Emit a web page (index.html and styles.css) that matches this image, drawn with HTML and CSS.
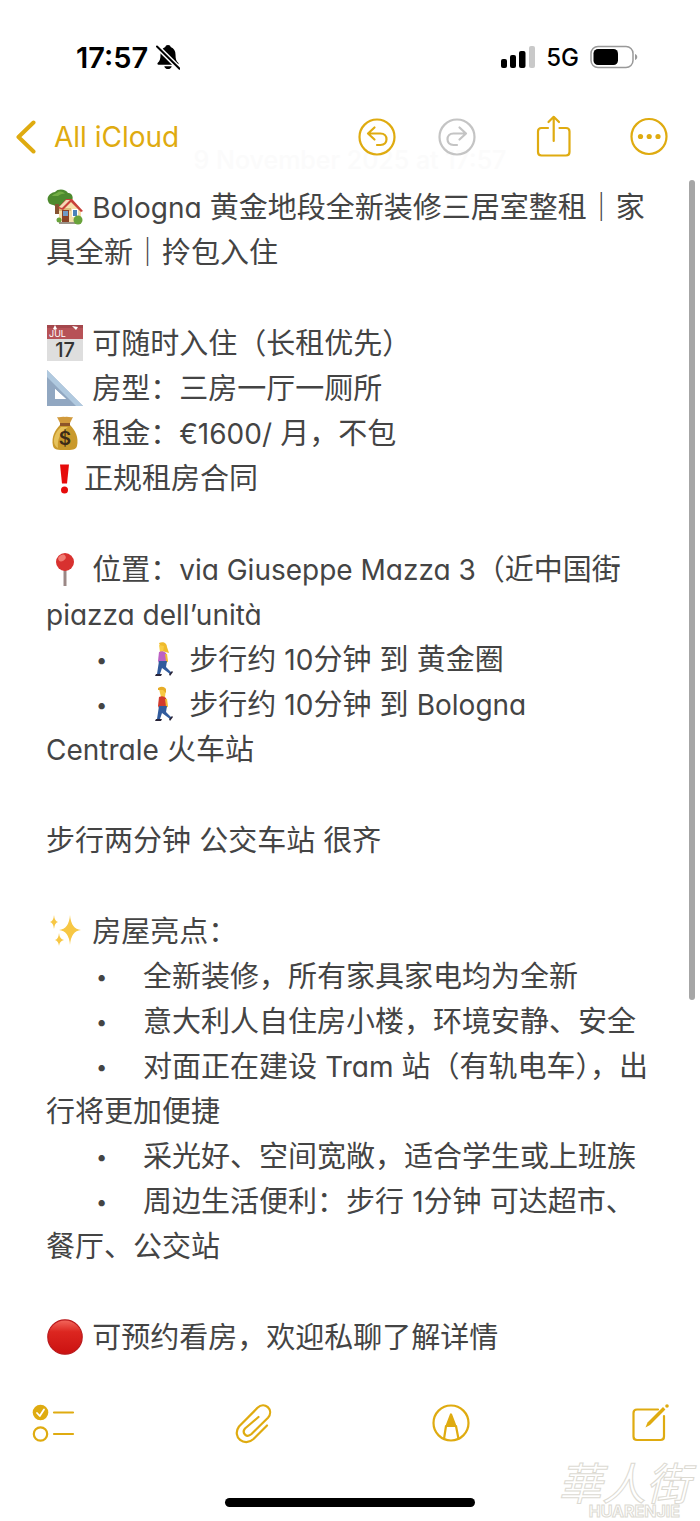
FILE: index.html
```html
<!DOCTYPE html>
<html lang="zh-CN">
<head>
  <meta charset="UTF-8">
  <meta name="viewport" content="width=device-width, initial-scale=1.0">
  <title>Notes</title>
  <link rel="stylesheet" href="styles.css">
</head>
<body>

  <!-- Status Bar -->
  <div class="status-bar">
    <div class="status-left">
      <span class="clock">17:57</span>
      <svg class="bell" width="24" height="26" viewBox="0 0 24 26">
        <path d="M12 1c-1.600 0-2.500.8-2.700 2C6 4.200 4.500 7 4.500 10.500c0 4.500-.8 6.500-2.700 8.300-.8.8-.4 2 .8 2h18.800c1.200 0 1.600-1.200.8-2-1.900-1.800-2.700-3.800-2.700-8.300C19.500 7 18 4.200 14.700 3 14.500 1.800 13.600 1 12 1zM8.300 22.200h7.400c-.4 1.800-1.800 2.900-3.700 2.900s-3.300-1.100-3.700-2.900z" fill="#000"/>
        <path d="M1 2.500l22.500 22.200" stroke="#fff" stroke-width="5"/>
        <path d="M1 2.500l22.500 22.200" stroke="#000" stroke-width="2" stroke-linecap="round"/>
      </svg>
    </div>
    <div class="status-right">
      <svg width="34" height="22" viewBox="0 0 34 22">
        <rect x="0" y="13" width="6" height="9" rx="2"/>
        <rect x="9" y="9" width="6" height="13" rx="2"/>
        <rect x="18" y="5" width="6.500" height="17" rx="2"/>
        <rect x="28" y="0" width="6" height="22" rx="2" fill="#c9c9c9"/>
      </svg>
      <span class="network">5G</span>
      <svg width="48" height="24" viewBox="0 0 48 24">
        <rect x="1" y="1.500" width="42" height="21" rx="7" fill="none" stroke="#999" stroke-width="1.500"/>
        <rect x="3.500" y="4" width="24.500" height="16" rx="4.500"/>
        <path d="M45 9c3 1 3 5 0 6z" fill="#999"/>
      </svg>
    </div>
  </div>

  <!-- Navigation -->
  <header class="nav-bar">
    <p class="note-date">9 November 2025 at 17:57</p>
    <a class="back" href="#">
      <svg width="20" height="34" viewBox="0 0 20 34">
        <path d="M17.500 2.500L2.500 17l15 14.500" fill="none" stroke="currentColor" stroke-width="4" stroke-linecap="round" stroke-linejoin="round"/>
      </svg>
      <span>All iCloud</span>
    </a>
    <div class="nav-actions">
      <div class="history">
        <button class="icon-button" type="button" aria-label="Undo">
          <svg width="38" height="42" viewBox="0 0 38 42">
            <circle cx="19" cy="21" r="17.500"/>
            <path d="M16.500 11.500L10 17.500l6.500 6M10.500 17.500h12c8 0 8 11.500 0 11.500h-3.500"/>
          </svg>
        </button>
        <button class="icon-button" type="button" aria-label="Redo" disabled>
          <svg width="38" height="42" viewBox="0 0 38 42">
            <circle cx="19" cy="21" r="17.500"/>
            <path d="M21.500 11.500l6.500 6-6.500 6M27.500 17.500h-12c-8 0-8 11.500 0 11.500H19"/>
          </svg>
        </button>
      </div>
      <button class="icon-button" type="button" aria-label="Share">
        <svg width="38" height="42" viewBox="0 0 38 42">
          <path d="M14 12H7.500Q4 12 4 15.500V36Q4 39.500 7.500 39.500H32Q35.500 39.500 35.500 36V15.500Q35.500 12 32 12H25.500M19.700 25V1M14.500 6l5.200-5.200L25 6"/>
        </svg>
      </button>
      <button class="icon-button" type="button" aria-label="More">
        <svg width="38" height="42" viewBox="0 0 38 42">
          <circle cx="19" cy="20.500" r="17.500"/>
          <g fill="currentColor" stroke="none">
            <circle cx="10.500" cy="20.500" r="2.600"/>
            <circle cx="19.200" cy="20.500" r="2.600"/>
            <circle cx="28" cy="20.500" r="2.600"/>
          </g>
        </svg>
      </button>
    </div>
  </header>

  <!-- Note -->
  <main class="note">
    <p><svg class="emoji" viewBox="0 0 36 36">
      <path d="M1 12C-1 7 5 3 8 3c3-4 11-3 13 1 5 0 6 6 3 9-3 5-8 3-9 5H9C8 15 2 17 1 12z" fill="#4d8a2e"/>
      <path d="M5 7c2-3 5-2 6-4 3-1 6 0 7 2-3-1-5 1-7 2-2 0-4 0-6 0z" fill="#72ad43"/>
      <path d="M8 15h4v10H8z" fill="#875331"/>
      <path d="M12 20l13-10 9 11v11l-12 2-10-2z" fill="#f6dfaa"/>
      <path d="M12 19h12v3H12z" fill="#dcb878"/>
      <path d="M11 19l8-9h6l11 12-2 1-10-10-8 8z" fill="#c8413a"/>
      <path d="M12 18l7-7h4l-8 8z" fill="#f4d8b4"/>
      <path d="M15 21h7v12h-7z" fill="#8a4327"/>
      <path d="M16 22h5v5h-5z" fill="#6f9bc5"/>
      <path d="M25 20h6v8h-6z" fill="#fff"/>
      <path d="M26 21h4v6h-4z" fill="#4c82ba"/>
      <path d="M12 33h17v2H12z" fill="#9a9389"/>
      <circle cx="31" cy="31" r="4.500" fill="#69a33b"/>
      <circle cx="12" cy="31" r="2.500" fill="#69a33b"/>
    </svg> <span class="latin">Bologna</span> 黄金地段全新装修三居室整租｜家具全新｜拎包入住</p>

    <div class="block">
      <p><svg class="emoji" viewBox="0 0 36 36">
        <path d="M0 0h36v36H0z" fill="#dedede"/>
        <path d="M0 0h36v14H0z" fill="#b75257"/>
        <path d="M0 0h36v3H0z" fill="#a4474c"/>
        <path d="M8 0l2 4-2 1-2-1zM25 1l6 1-2 3z" fill="#fff"/>
        <text x="2" y="12" class="cal-month">JUL</text>
        <text x="18" y="32" class="cal-day" text-anchor="middle">17</text>
      </svg> 可随时入住（长租优先）</p>
      <p><svg class="emoji" viewBox="0 0 36 36">
        <path d="M0 0v36h36zM8 19l11 10H8z" fill="#91a7c1" fill-rule="evenodd"/>
        <path d="M0 0l36 36h-7L0 7z" fill="#b0c9df"/>
        <path d="M8 19l11 10H8z" fill="#fff"/>
      </svg> 房型：三房一厅一厕所</p>
      <p><svg class="emoji" viewBox="0 0 36 36">
        <path d="M10 2c3 1 5-1 8 0 3-1 5 1 8 0l-4 8h-8z" fill="#d19a3c"/>
        <path d="M13 10h10c5 5 9 12 7 21-1 4-5 4-12 4s-11 0-12-4c-2-9 2-16 7-21z" fill="#c9992c"/>
        <path d="M14 12h7c-8 5-11 13-10 21-7-4-4-15 3-21z" fill="#e6c25c"/>
        <path d="M13 8h10v3H13z" fill="#8d5429"/>
        <text x="18" y="30" class="dollar" text-anchor="middle">$</text>
      </svg> 租金：<span class="latin">€1600/</span> 月，不包</p>
      <p><svg class="emoji" viewBox="0 0 36 36">
        <path d="M13 4.500h9l-2 19h-5z" fill="#e60b0b"/>
        <circle cx="17.500" cy="30" r="3.500" fill="#e60b0b"/>
      </svg>正规租房合同</p>
    </div>

    <div class="block">
      <p><svg class="emoji" viewBox="0 0 36 36">
        <path d="M16.500 17h3v18h-3z" fill="#9b8886"/>
        <circle cx="18" cy="11" r="9" fill="#d8312f"/>
        <ellipse cx="15" cy="7" rx="4" ry="3" fill="#f17c73" transform="rotate(-35 15 7)"/>
      </svg> 位置：<span class="latin">via Giuseppe Mazza 3</span>（近中国街 <span class="latin">piazza dell’unità</span></p>
      <ul>
        <li><svg class="emoji" viewBox="0 0 36 36">
          <path d="M15 2c4-2 8 0 8 4l2 6-7-2z" fill="#efbb2c"/>
          <path d="M15 4l5 1-1 6h-3z" fill="#f8cc45"/>
          <path d="M15 11q4-2 7 1l1 9-8 1-1-2z" fill="#bc61c4"/>
          <path d="M22 13l1 7-4 3" fill="none" stroke="#f2ba35" stroke-width="2"/>
          <path d="M15 20h8l-1 6 6 6-2 1-8-6-2 6h-3z" fill="#315b9d"/>
          <path d="M12 33h6l-1 2h-6zM25 33l3-3 1 1-3 4z" fill="#282438"/>
        </svg> 步行约 <span class="latin">10</span>分钟 到 黄金圈</li>
        <li><svg class="emoji" viewBox="0 0 36 36">
          <path d="M15 3q3-3 7 0l-1 8h-4z" fill="#f7c944"/>
          <path d="M14 2q5-3 8 1v4l-3-3h-5z" fill="#e7ad27"/>
          <path d="M15 11q4-2 7 1l1 9-8 1-1-2z" fill="#d23a2d"/>
          <path d="M22 13l1 7-4 3" fill="none" stroke="#f2ba35" stroke-width="2"/>
          <path d="M15 20h8l-1 6 6 6-2 1-8-6-2 6h-3z" fill="#315b9d"/>
          <path d="M12 33h6l-1 2h-6zM25 33l3-3 1 1-3 4z" fill="#282438"/>
        </svg> 步行约 <span class="latin">10</span>分钟 到 <span class="latin">Bologna<br>Centrale</span> 火车站</li>
      </ul>
    </div>

    <p>步行两分钟 公交车站 很齐</p>

    <div class="block">
      <p><svg class="emoji" viewBox="0 0 36 36" fill="#f7c744">
        <path d="M23 2q1 14 11 15-10 1-11 15-1-14-11-15 10-1 11-15z"/>
        <path d="M7 2q.5 6 4 7-3.500 1-4 7-.5-6-4-7 3.500-1 4-7z"/>
        <path d="M12 20q.5 6 5 7-4.500 1-5 6-.5-5-4-6 3.500-1 4-7z"/>
      </svg> 房屋亮点：</p>
      <ul>
        <li>全新装修，所有家具家电均为全新</li>
        <li>意大利人自住房小楼，环境安静、安全</li>
        <li>对面正在建设 <span class="latin">Tram</span> 站（有轨电车），出行将更加便捷</li>
        <li>采光好、空间宽敞，适合学生或上班族</li>
        <li>周边生活便利：步行 <span class="latin">1</span>分钟 可达超市、餐厅、公交站</li>
      </ul>
    </div>

    <p><svg class="emoji" viewBox="0 0 36 36">
      <defs>
        <linearGradient id="red-ball" x2="0" y2="1">
          <stop offset="0" stop-color="#f3685d"/>
          <stop offset=".35" stop-color="#dc2620"/>
          <stop offset="1" stop-color="#cb1110"/>
        </linearGradient>
      </defs>
      <circle cx="18" cy="18" r="17.200" fill="url(#red-ball)" stroke="#b91a1d" stroke-width="1.200"/>
    </svg> 可预约看房，欢迎私聊了解详情</p>
    <span class="scroll-thumb"></span>
  </main>

  <!-- Toolbar -->
  <footer class="bottom">
    <div class="toolbar">
      <button class="icon-button" type="button" aria-label="Checklist">
        <svg width="42" height="42" viewBox="0 0 42 42">
          <circle cx="8.500" cy="10.500" r="7.800" fill="currentColor" stroke="none"/>
          <path d="M5 11l2.800 3L12 7.500" stroke="#fff" stroke-width="1.800"/>
          <circle cx="8.500" cy="32" r="6.700"/>
          <path d="M22 10.500h19M22 32h19"/>
        </svg>
      </button>
      <button class="icon-button" type="button" aria-label="Attach">
        <svg width="38" height="42" viewBox="0 0 38 42">
          <path d="M33 23.500L19.500 37c-9 8.500-22-2-14.500-12.500L23.500 5.800c7-7 17 2 10.500 10L17.500 32c-5 4.500-10-1-6.500-5.500L24.500 15"/>
        </svg>
      </button>
      <button class="icon-button" type="button" aria-label="Markup">
        <svg width="38" height="42" viewBox="0 0 38 42">
          <circle cx="19" cy="21" r="17.500"/>
          <path d="M14 24L12 37M24 24l2.500 13M14 24h10"/>
          <path d="M19 12.500L23 23h-8z" fill="currentColor"/>
        </svg>
      </button>
      <button class="icon-button" type="button" aria-label="New note">
        <svg width="38" height="42" viewBox="0 0 38 42">
          <path d="M28 7.500H7Q3.500 7.500 3.500 11v23.500Q3.500 38 7 38h23.500Q34 38 34 34.500V14"/>
          <path d="M15.500 25.500l2-5L33 5l2.400 2.400L20 23z" fill="currentColor" stroke="none"/>
          <circle cx="37" cy="4" r="1.800" fill="currentColor" stroke="none"/>
        </svg>
      </button>
    </div>
    <div class="home-indicator"></div>
    <div class="watermark">
      <span class="watermark-name">華人街</span>
      <span class="watermark-latin">HUARENJIE</span>
    </div>
  </footer>

</body>
</html>
```
FILE: styles.css
```css
/* Global Styles */
*,
*::before {
  box-sizing: border-box;
}

body {
  margin: 0;
  min-height: 100vh;
  display: flex;
  flex-direction: column;
  position: relative;
  background-color: #fff;
  color: #444;
  font-family: Inter, "Noto Sans CJK SC", sans-serif;
}

p,
ul {
  margin: 0;
  padding: 0;
}

svg {
  display: block;
}

/* Status Bar */
.status-bar {
  height: 114px;
  padding: 0 62px 0 76px;
  display: flex;
  align-items: center;
  justify-content: space-between;
  color: #000;
}

.status-left {
  display: flex;
  align-items: center;
  gap: 8px;
}

.status-right {
  display: flex;
  align-items: center;
  gap: 11px;
}

.clock {
  font-size: 29px;
  font-weight: 600;
}

.network {
  font-size: 24px;
  font-weight: 500;
}

/* Navigation */
.nav-bar {
  position: relative;
  height: 46px;
  padding: 0 32px 0 16px;
  display: flex;
  align-items: center;
  justify-content: space-between;
}

.note-date {
  position: absolute;
  left: 0;
  right: 0;
  bottom: -16px;
  text-align: center;
  font-size: 25px;
  line-height: 32px;
  font-weight: 500;
  color: #fbfbfb;
}

.back {
  position: relative;
  display: flex;
  align-items: center;
  gap: 18px;
  color: #dfab10;
  font-size: 28px;
  text-decoration: none;
}

.nav-actions {
  position: relative;
  display: flex;
  gap: 58px;
}

.history {
  display: flex;
  gap: 42px;
}

.icon-button {
  padding: 0;
  border: 0;
  background: none;
  color: #dfab10;
  cursor: pointer;
}

.icon-button svg {
  fill: none;
  stroke: currentColor;
  stroke-width: 2.2;
  stroke-linecap: round;
  stroke-linejoin: round;
  overflow: visible;
}

.icon-button:disabled {
  color: #c4c4c4;
  cursor: default;
}

/* Note */
.note {
  position: relative;
  flex: 1;
  padding: 25px 48px 0 46px;
  display: flex;
  flex-direction: column;
  gap: 46px;
  font-size: 29px;
  line-height: 45px;
  font-feature-settings: "cv11";
}

/* shorter line box so mixed sizes keep the 45px rows */
.note .latin {
  font-size: 28px;
  line-height: 28px;
}

.note ul {
  list-style: none;
}

.note li::before {
  content: "•";
  display: inline-block;
  width: 97px;
  padding-left: 50px;
  font-size: 20px;
  line-height: 20px;
  vertical-align: 3px;
}

.emoji {
  display: inline-block;
  width: 36px;
  height: 36px;
  margin: 0 1px;
  vertical-align: -7px;
}

.cal-month {
  font-size: 9px;
  fill: #fff;
}

.cal-day {
  font-size: 20px;
  font-weight: 500;
  fill: #333;
}

.dollar {
  font-size: 19px;
  font-weight: 600;
  fill: #3c2b18;
}

.scroll-thumb {
  position: absolute;
  top: 20px;
  right: 5px;
  width: 6px;
  height: 66%;
  border-radius: 3px;
  background-color: #a6a6a6;
}

/* Toolbar */
.toolbar {
  padding: 0 32px;
  display: flex;
  justify-content: space-between;
}

.home-indicator {
  width: 250px;
  height: 9px;
  margin: 54px auto 14px;
  border-radius: 5px;
  background-color: #000;
}

.watermark {
  position: absolute;
  right: 10px;
  bottom: 2px;
  display: flex;
  flex-direction: column;
  align-items: flex-end;
  color: #fff;
  -webkit-text-stroke: 1px #dcdad2;
}

.watermark-name {
  font-family: "Noto Sans CJK TC", sans-serif;
  font-size: 44px;
  line-height: 44px;
  font-style: italic;
}

.watermark-latin {
  margin-right: 10px;
  font-size: 16px;
  line-height: 16px;
  font-weight: 700;
}
```
